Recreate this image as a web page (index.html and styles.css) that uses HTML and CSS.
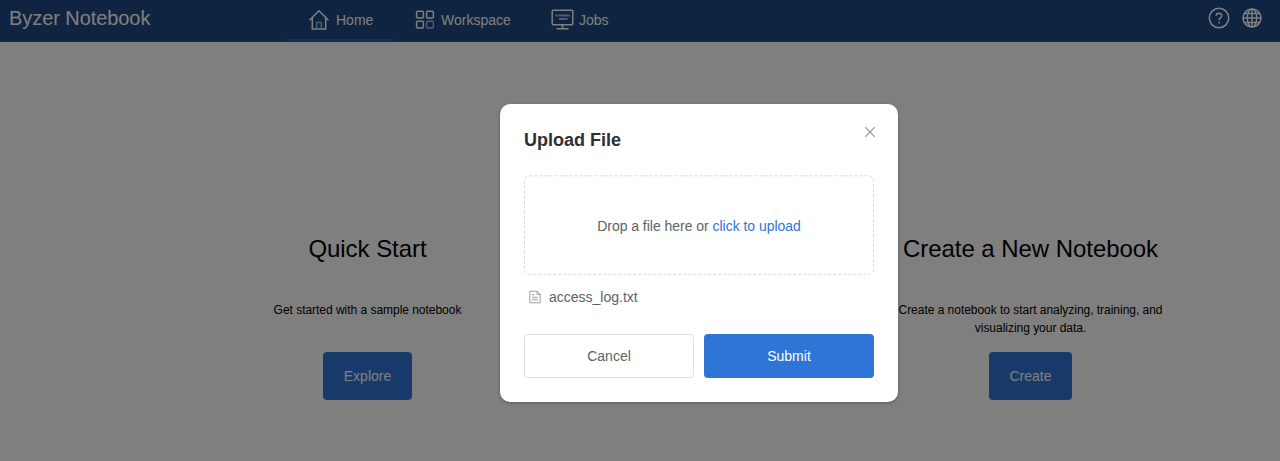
FILE: index.html
```html
<!DOCTYPE html>
<html lang="en">
<head>
<meta charset="utf-8">
<title>Byzer Notebook</title>
<link rel="stylesheet" href="styles.css">
</head>
<body>
<div class="app">
  <header class="header">
    <div class="brand">Byzer Notebook</div>
    <nav class="nav">
      <a class="nav-item nav-home active">
        <svg class="icon" width="22" height="22" viewBox="0 0 22 22"><path d="M1.500 11.300 11 1.700l9.500 9.600M4.300 9v11h13.400V9"/><path class="accent" d="M8.600 20v-6.600h4.800V20"/></svg>
        <span>Home</span>
      </a>
      <a class="nav-item nav-workspace">
        <svg class="icon" width="20" height="20" viewBox="0 0 20 20"><rect x="1.600" y="1.200" width="6.800" height="6.800" rx="1"/><rect x="11.600" y="1.200" width="6.800" height="6.800" rx="1"/><rect x="1.600" y="11.200" width="6.800" height="6.800" rx="1"/><rect class="accent" x="11.600" y="11.200" width="6.800" height="6.800" rx="1"/></svg>
        <span>Workspace</span>
      </a>
      <a class="nav-item nav-jobs">
        <svg class="icon" width="23" height="22" viewBox="0 0 23 22"><rect x="1.200" y="1.200" width="20.600" height="14.600" rx="1"/><path d="M11.500 16v3.500M5.500 19.800h12"/><path class="accent bars" d="M4.200 6.500h2.500M7.200 6.500h11.500M8 10h8.500"/></svg>
        <span>Jobs</span>
      </a>
    </nav>
    <div class="tools">
      <svg class="icon" width="22" height="22" viewBox="0 0 22 22"><circle cx="11" cy="11" r="9.700"/><path d="M8.200 8.800C8.200 5.400 13.800 5.400 13.800 8.700 13.800 10.700 11 10.600 11 13.200M11 14.700v1.700"/></svg>
      <svg class="icon" width="20" height="20" viewBox="0 0 20 20"><circle cx="10" cy="10" r="9"/><ellipse cx="10" cy="10" rx="4.700" ry="9"/><path d="M10 1v18M2.200 5.500h15.600M1 10h18M2.200 14.500h15.600"/></svg>
    </div>
  </header>
  <main class="main">
    <section class="card">
      <h2>Quick Start</h2>
      <p>Get started with a sample notebook</p>
      <button class="action explore">Explore</button>
    </section>
    <section class="card">
      <h2>Create a New Notebook</h2>
      <p>Create a notebook to start analyzing, training, and visualizing your data.</p>
      <button class="action create">Create</button>
    </section>
  </main>
</div>
<div class="overlay">
  <div class="dialog">
    <div class="dialog-head">
      <h3>Upload File</h3>
      <svg class="close" width="12" height="12" viewBox="0 0 12 12"><path d="M1.200 1.200l9.600 9.600M10.800 1.200l-9.600 9.600"/></svg>
    </div>
    <div class="drop">
      <svg class="drop-border" width="350" height="100"><rect x=".5" y=".8" width="349" height="98.500" rx="5"/></svg>
      <span>Drop a file here or <a>click to upload</a></span>
    </div>
    <div class="file">
      <svg class="file-icon" width="12" height="14" viewBox="0 0 12 14"><path d="M.800 1.200h7.400l3 3v8.600H.800zM8 1.400v3h3M3 4.700h2.500M3 7.300h6M3 9.800h6"/></svg>
      <span>access_log.txt</span>
    </div>
    <div class="buttons">
      <button class="btn cancel">Cancel</button>
      <button class="btn submit">Submit</button>
    </div>
  </div>
</div>
</body>
</html>
```

FILE: styles.css
```css
* { box-sizing: border-box; }
body {
  margin: 0;
  height: 461px;
  overflow: hidden;
  background: #fff;
  font-family: "Liberation Sans", Arial, sans-serif;
  font-size: 14px;
}
h2, h3, p { margin: 0; font-weight: 400; }
button { font-family: inherit; font-size: 14px; padding: 0; }
.header {
  display: flex;
  height: 42px;
  padding-left: 9px;
  background: #1e4880;
  border-bottom: 1px solid #3a5678;
  color: #fff;
}
.brand { width: 278px; font-size: 20px; line-height: 37px; letter-spacing: -.07px; }
.nav { display: flex; }
.nav-item { display: flex; align-items: center; height: 41px; padding-bottom: 2px; }
.nav-home { width: 106px; padding-left: 21px; gap: 6px; }
.nav-workspace { width: 136px; padding-left: 22px; gap: 6px; }
.nav-jobs { padding-left: 22px; gap: 5px; }
.active { box-shadow: inset 0 -2px #2460b8; }
.icon { fill: none; stroke: #fff; stroke-width: 1.5; flex: none; }
.accent { stroke: #9fbbe0; }
.bars { stroke-width: 2.2; }
.tools { display: flex; align-items: center; gap: 12px; margin-left: auto; padding: 0 18px 5px 0; }
.main { display: flex; justify-content: center; gap: 383px; padding: 192px 0 0 118px; color: #000; }
.card { width: 280px; flex: none; display: flex; flex-direction: column; align-items: center; text-align: center; }
.card h2 { font-size: 24px; line-height: 30px; white-space: nowrap; letter-spacing: -.05px; }
.card p { width: 270px; height: 36px; margin: 37px 0 15px; font-size: 12px; line-height: 18px; letter-spacing: -.03px; }
.action { height: 48px; border: 0; border-radius: 4px; background: #3075d6; color: #fff; }
.explore { width: 89px; }
.create { width: 83px; }
.overlay {
  position: absolute;
  inset: 0;
  padding: 104px 0 0 500px;
  background: rgba(0, 0, 0, .5);
}
.dialog {
  width: 398px;
  height: 297.500px;
  padding: 24px;
  border-radius: 10px;
  background: #fff;
  box-shadow: 0 1px 3px rgba(0, 0, 0, .3);
}
.dialog-head { display: flex; justify-content: space-between; height: 47px; }
.dialog-head h3 { font-size: 18px; font-weight: 700; line-height: 24px; color: #2f3033; }
.close { margin: -2px -2px 0 0; fill: none; stroke: #909399; stroke-width: 1.2; }
.drop {
  position: relative;
  display: flex;
  align-items: center;
  justify-content: center;
  height: 100px;
  padding-top: 2px;
  letter-spacing: -.03px;
  color: #606266;
}
.drop-border { position: absolute; inset: 0; fill: none; stroke: #d9d9d9; stroke-dasharray: 3 2; }
.drop a { color: #2f75d6; }
.file { display: flex; align-items: center; gap: 8px; height: 44px; padding-left: 5px; color: #606266; }
.file-icon { fill: none; stroke: #909399; stroke-width: .9; }
.buttons { display: flex; gap: 10px; margin-top: 15px; }
.btn { flex: none; width: 170px; height: 43.500px; border-radius: 4px; }
.cancel { border: 1px solid #dcdfe6; background: #fff; color: #606266; }
.submit { border: 0; background: #2f75d5; color: #fff; }
```
